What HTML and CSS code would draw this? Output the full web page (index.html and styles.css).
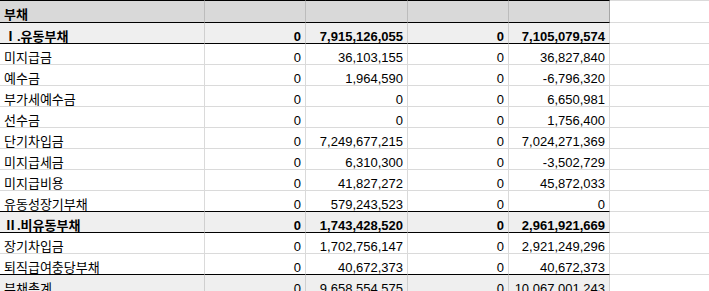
FILE: index.html
```html
<!DOCTYPE html>
<html lang="ko">
<head>
<meta charset="utf-8">
<title>부채</title>
<link rel="stylesheet" href="styles.css">
</head>
<body>
<div class="sheet">
  <div class="row hdr">
    <div class="c lbl">부채</div><div class="c"></div><div class="c"></div><div class="c"></div><div class="c"></div><div class="c x"></div>
  </div>
  <div class="row sub endline">
    <div class="c lbl">Ⅰ.유동부채</div><div class="c n">0</div><div class="c n">7,915,126,055</div><div class="c n">0</div><div class="c n">7,105,079,574</div><div class="c x"></div>
  </div>
  <div class="row">
    <div class="c lbl">미지급금</div><div class="c n">0</div><div class="c n">36,103,155</div><div class="c n">0</div><div class="c n">36,827,840</div><div class="c x"></div>
  </div>
  <div class="row">
    <div class="c lbl">예수금</div><div class="c n">0</div><div class="c n">1,964,590</div><div class="c n">0</div><div class="c n">-6,796,320</div><div class="c x"></div>
  </div>
  <div class="row">
    <div class="c lbl">부가세예수금</div><div class="c n">0</div><div class="c n">0</div><div class="c n">0</div><div class="c n">6,650,981</div><div class="c x"></div>
  </div>
  <div class="row">
    <div class="c lbl">선수금</div><div class="c n">0</div><div class="c n">0</div><div class="c n">0</div><div class="c n">1,756,400</div><div class="c x"></div>
  </div>
  <div class="row">
    <div class="c lbl">단기차입금</div><div class="c n">0</div><div class="c n">7,249,677,215</div><div class="c n">0</div><div class="c n">7,024,271,369</div><div class="c x"></div>
  </div>
  <div class="row">
    <div class="c lbl">미지급세금</div><div class="c n">0</div><div class="c n">6,310,300</div><div class="c n">0</div><div class="c n">-3,502,729</div><div class="c x"></div>
  </div>
  <div class="row">
    <div class="c lbl">미지급비용</div><div class="c n">0</div><div class="c n">41,827,272</div><div class="c n">0</div><div class="c n">45,872,033</div><div class="c x"></div>
  </div>
  <div class="row endline">
    <div class="c lbl">유동성장기부채</div><div class="c n">0</div><div class="c n">579,243,523</div><div class="c n">0</div><div class="c n">0</div><div class="c x"></div>
  </div>
  <div class="row sub endline">
    <div class="c lbl">Ⅱ.비유동부채</div><div class="c n">0</div><div class="c n">1,743,428,520</div><div class="c n">0</div><div class="c n">2,961,921,669</div><div class="c x"></div>
  </div>
  <div class="row">
    <div class="c lbl">장기차입금</div><div class="c n">0</div><div class="c n">1,702,756,147</div><div class="c n">0</div><div class="c n">2,921,249,296</div><div class="c x"></div>
  </div>
  <div class="row endline">
    <div class="c lbl">퇴직급여충당부채</div><div class="c n">0</div><div class="c n">40,672,373</div><div class="c n">0</div><div class="c n">40,672,373</div><div class="c x"></div>
  </div>
  <div class="row total">
    <div class="c lbl">부채총계</div><div class="c n">0</div><div class="c n">9,658,554,575</div><div class="c n">0</div><div class="c n">10,067,001,243</div><div class="c x"></div>
  </div>
</div>
</body>
</html>
```
FILE: styles.css
```css
html, body {
  margin: 0;
  padding: 0;
  background: #ffffff;
}

body {
  font-family: "Liberation Sans", "Noto Sans CJK KR", sans-serif;
  font-size: 13px;
  color: #000000;
  overflow: hidden;
}

.sheet {
  width: 709px;
}

.row {
  display: grid;
  grid-template-columns: 205px 101px 102px 101px 101px 99px;
}

.c {
  box-sizing: border-box;
  height: 21px;
  display: flex;
  align-items: flex-end;
  padding: 0 4px 0 4px;
  line-height: 13px;
  white-space: nowrap;
  overflow: hidden;
  border-right: 1px solid #dadada;
  border-bottom: 1px solid #dadada;
}

.c.n {
  justify-content: flex-end;
}

.c.x {
  border-right: none;
  background: #ffffff;
}

/* header row */
.hdr .c {
  height: 23px;
  background: #d9d9d9;
  border-top: 1px solid #000000;
  border-bottom: 1px solid #000000;
  border-right-color: #bcbcbc;
  font-weight: bold;
  padding-bottom: 1px;
}

.hdr .c:nth-child(5) {
  border-right-color: #a6a6a6;
}

.hdr .c.x {
  background: #ffffff;
  border-top-color: #dadada;
  border-bottom-color: #dadada;
}

/* subtotal rows */
.sub .c {
  background: #efefef;
  font-weight: bold;
  border-right-color: #cfcfcf;
}

.total .c {
  background: #efefef;
  border-right-color: #cfcfcf;
}

.sub .c.x,
.total .c.x {
  background: #ffffff;
  font-weight: normal;
}

/* heavy line under a row */
.endline .c {
  border-bottom-color: #000000;
}

.endline .c.x {
  border-bottom-color: #dadada;
}
```
